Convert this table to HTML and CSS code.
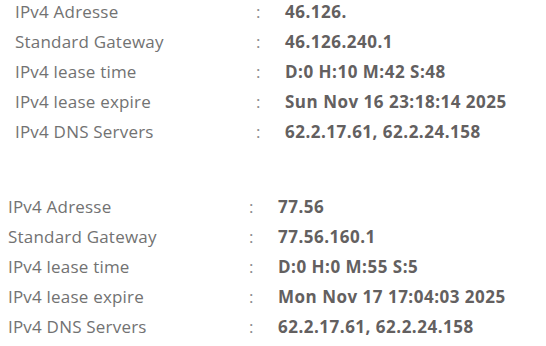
FILE: index.html
```html
<!DOCTYPE html>
<html lang="de">
<head>
<meta charset="utf-8">
<title>IPv4 Info</title>
<link rel="stylesheet" href="styles.css">
</head>
<body>
<div class="page">
  <dl class="info info-a">
    <div class="row"><dt>IPv4 Adresse</dt><span class="sep">:</span><dd>46.126.</dd></div>
    <div class="row"><dt>Standard Gateway</dt><span class="sep">:</span><dd>46.126.240.1</dd></div>
    <div class="row"><dt>IPv4 lease time</dt><span class="sep">:</span><dd>D:0 H:10 M:42 S:48</dd></div>
    <div class="row"><dt>IPv4 lease expire</dt><span class="sep">:</span><dd>Sun Nov 16 23:18:14 2025</dd></div>
    <div class="row"><dt>IPv4 DNS Servers</dt><span class="sep">:</span><dd>62.2.17.61, 62.2.24.158</dd></div>
  </dl>
  <dl class="info info-b">
    <div class="row"><dt>IPv4 Adresse</dt><span class="sep">:</span><dd>77.56</dd></div>
    <div class="row"><dt>Standard Gateway</dt><span class="sep">:</span><dd>77.56.160.1</dd></div>
    <div class="row"><dt>IPv4 lease time</dt><span class="sep">:</span><dd>D:0 H:0 M:55 S:5</dd></div>
    <div class="row"><dt>IPv4 lease expire</dt><span class="sep">:</span><dd>Mon Nov 17 17:04:03 2025</dd></div>
    <div class="row"><dt>IPv4 DNS Servers</dt><span class="sep">:</span><dd>62.2.17.61, 62.2.24.158</dd></div>
  </dl>
</div>
</body>
</html>
```
FILE: styles.css
```css
html, body {
  margin: 0;
  padding: 0;
  background: #ffffff;
}
.page {
  display: flex;
  flex-direction: column;
  gap: 53px;
  padding-top: 1px;
  font-family: "Open Sans", "Noto Sans", sans-serif;
  font-size: 17px;
}
.info {
  margin: 0;
  display: flex;
  flex-direction: column;
  gap: 8px;
}
.info-a { padding-left: 15px; }
.info-b { padding-left: 8px; }
.row {
  display: grid;
  grid-template-columns: 241px 29px 1fr;
  line-height: 22px;
  height: 22px;
}
dt {
  color: #727272;
  letter-spacing: 0.2px;
}
.sep {
  color: #8a8a8a;
}
dd {
  margin: 0;
  color: #636060;
  font-weight: 700;
  letter-spacing: 0.5px;
}
```
